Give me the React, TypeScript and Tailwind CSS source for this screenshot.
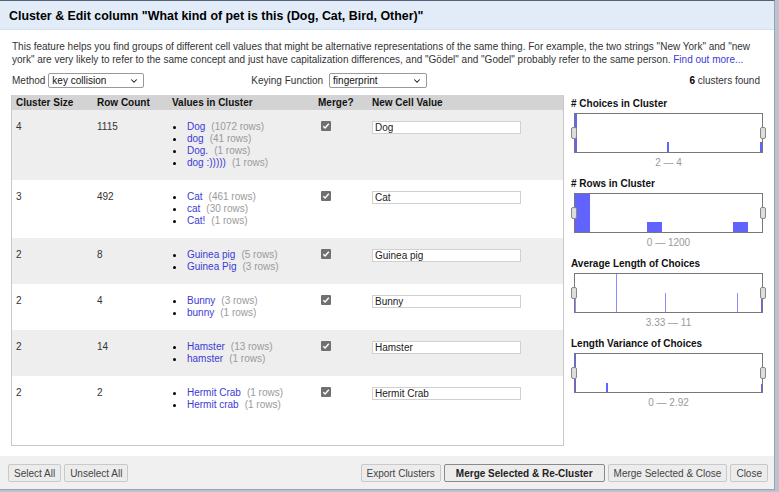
import { ChevronDown } from "lucide-react"

type Choice = { v: string; n: number }
type Cluster = { size: number; rows: number; choices: Choice[]; value: string }

const clusters: Cluster[] = [
  {
    size: 4,
    rows: 1115,
    value: "Dog",
    choices: [
      { v: "Dog", n: 1072 },
      { v: "dog", n: 41 },
      { v: "Dog.", n: 1 },
      { v: "dog :)))))", n: 1 },
    ],
  },
  {
    size: 3,
    rows: 492,
    value: "Cat",
    choices: [
      { v: "Cat", n: 461 },
      { v: "cat", n: 30 },
      { v: "Cat!", n: 1 },
    ],
  },
  {
    size: 2,
    rows: 8,
    value: "Guinea pig",
    choices: [
      { v: "Guinea pig", n: 5 },
      { v: "Guinea Pig", n: 3 },
    ],
  },
  {
    size: 2,
    rows: 4,
    value: "Bunny",
    choices: [
      { v: "Bunny", n: 3 },
      { v: "bunny", n: 1 },
    ],
  },
  {
    size: 2,
    rows: 14,
    value: "Hamster",
    choices: [
      { v: "Hamster", n: 13 },
      { v: "hamster", n: 1 },
    ],
  },
  {
    size: 2,
    rows: 2,
    value: "Hermit Crab",
    choices: [
      { v: "Hermit Crab", n: 1 },
      { v: "Hermit crab", n: 1 },
    ],
  },
]

// bars: [left px, width px, height px, light?]
type Bar = [number, number, number, boolean?]

const facets: { title: string; range: string; bars: Bar[] }[] = [
  {
    title: "# Choices in Cluster",
    range: "2 \u2014 4",
    bars: [
      [0, 2, 38],
      [92, 2, 10],
      [185, 2, 10],
    ],
  },
  {
    title: "# Rows in Cluster",
    range: "0 \u2014 1200",
    bars: [
      [0, 15, 38],
      [72, 15, 10],
      [158, 15, 10],
    ],
  },
  {
    title: "Average Length of Choices",
    range: "3.33 \u2014 11",
    bars: [
      [0, 1, 14, true],
      [41, 1, 38, true],
      [90, 1, 19, true],
      [162, 1, 19, true],
      [186, 1, 19],
    ],
  },
  {
    title: "Length Variance of Choices",
    range: "0 \u2014 2.92",
    bars: [
      [0, 1, 38],
      [31, 2, 9],
      [186, 1, 8],
    ],
  },
]

function Check() {
  return (
    <span className="flex h-[10px] w-[10px] items-center justify-center rounded-[1px] bg-[#707070]">
      <svg width="8" height="8" viewBox="0 0 8 8">
        <path d="M1.3 4.2 L3.1 6 L6.8 1.8" fill="none" stroke="#fff" strokeWidth="1.4" />
      </svg>
    </span>
  )
}

function Facet({ title, range, bars }: { title: string; range: string; bars: Bar[] }) {
  return (
    <div className="mb-[9px]">
      <div className="text-[10px] font-bold leading-[12px] text-[#111]">{title}</div>
      <div className="relative ml-[3px] mt-[3px] h-[40px] w-[189px] border border-[#777] bg-white">
        {bars.map(([l, w, h, light], i) => (
          <div
            key={i}
            className={light ? "absolute bottom-0 bg-[#8c8cff]" : "absolute bottom-0 bg-[#6262ff]"}
            style={{ left: l, width: w, height: h }}
          />
        ))}
        <span className="absolute left-[-4px] top-[13px] h-[12px] w-[6px] rounded-[2px] border border-[#888] bg-[#ddd]" />
        <span className="absolute right-[-4px] top-[13px] h-[12px] w-[6px] rounded-[2px] border border-[#888] bg-[#ddd]" />
      </div>
      <div className="ml-[3px] mt-[4px] w-[189px] text-center text-[10px] leading-[12px] text-[#999]">{range}</div>
    </div>
  )
}

function Btn({ children, bold }: { children: string; bold?: boolean }) {
  return (
    <button
      className={
        bold
          ? "h-[18px] rounded-[2px] border border-[#8a8a8a] bg-[#ececec] px-[11px] text-[10px] font-bold text-[#222]"
          : "h-[18px] rounded-[2px] border border-[#c9c9c9] bg-[#ececec] px-[5px] text-[10px] text-[#444]"
      }
    >
      {children}
    </button>
  )
}

export default function App() {
  return (
    <div className="h-[492px] w-[779px] bg-[#bcc3ce] font-['Liberation_Sans',Arial,sans-serif]">
      <div className="flex h-[490px] w-[775px] flex-col border-r border-b border-t border-[#9aa3b2] border-t-[#56627a] bg-white">
        <div className="flex h-[29px] shrink-0 items-center border-b border-[#d5dfec] bg-[#e2ecf9] pl-[9px] pt-[3px] text-[12.4px] font-bold text-black">
          Cluster &amp; Edit column "What kind of pet is this (Dog, Cat, Bird, Other)"
        </div>

        <div className="flex-1 px-[11px] pt-[10px]">
          <p className="pl-[1px] text-[10px] leading-[13px] text-[#333]">
            This feature helps you find groups of different cell values that might be alternative representations of
            the same thing. For example, the two strings "New York" and "new york" are very likely to refer to the same
            concept and just have capitalization differences, and "Gödel" and "Godel" probably refer to the same person.{" "}
            <a className="text-[#3b3bd6]">Find out more...</a>
          </p>

          <div className="mt-[7px] flex h-[15px] items-center text-[10px] text-[#333]">
            <span className="pl-[1px]">Method</span>
            <span className="ml-[3px] flex h-[15px] w-[96px] items-center justify-between rounded-[2px] border border-[#999] bg-white pl-[3px] pr-[4px] text-[#111]">
              key collision
              <ChevronDown size={10} strokeWidth={2.5} />
            </span>
            <span className="ml-[107px]">Keying Function</span>
            <span className="ml-[6px] flex h-[15px] w-[98px] items-center justify-between rounded-[2px] border border-[#999] bg-white pl-[3px] pr-[4px] text-[#111]">
              fingerprint
              <ChevronDown size={10} strokeWidth={2.5} />
            </span>
            <span className="ml-auto pr-[3px]">
              <b className="text-black">6</b> clusters found
            </span>
          </div>

          <div className="mt-[7px] flex">
            <div className="h-[351px] w-[553px] border-b border-l border-r border-[#c8c8c8] text-[10px] leading-[12px] text-[#333]">
              <div className="grid h-[15px] grid-cols-[81px_75px_146px_54px_1fr] items-center bg-[#d3d3d3] font-bold text-[#111]">
                <span className="pl-[4px]">Cluster Size</span>
                <span className="pl-[4px]">Row Count</span>
                <span className="pl-[4px]">Values in Cluster</span>
                <span className="pl-[4px]">Merge?</span>
                <span className="pl-[4px]">New Cell Value</span>
              </div>
              {clusters.map((c, i) => (
                <div
                  key={i}
                  className={
                    i % 2 === 0
                      ? "grid grid-cols-[81px_75px_146px_54px_1fr] bg-[#eeeeee] pb-[11px] pt-[11px]"
                      : "grid grid-cols-[81px_75px_146px_54px_1fr] bg-white pb-[11px] pt-[11px]"
                  }
                >
                  <span className="pl-[4px]">{c.size}</span>
                  <span className="pl-[4px]">{c.rows}</span>
                  <ul className="pl-[5px]">
                    {c.choices.map((ch) => (
                      <li key={ch.v} className="flex items-center whitespace-nowrap">
                        <span className="mr-[11px] h-[3px] w-[3px] rounded-full bg-black" />
                        <a className="text-[#3b3bd6]">{ch.v}</a>
                        <span className="ml-[6px] text-[#9a9a9a]">({ch.n} rows)</span>
                      </li>
                    ))}
                  </ul>
                  <span className="pl-[7px]">
                    <Check />
                  </span>
                  <span className="pl-[4px]">
                    <span className="flex h-[13px] w-[149px] items-center border border-[#d0d0d0] bg-white pl-[2px] text-[#222]">
                      {c.value}
                    </span>
                  </span>
                </div>
              ))}
            </div>

            <div className="ml-[7px] pt-[3px]">
              {facets.map((f) => (
                <Facet key={f.title} {...f} />
              ))}
            </div>
          </div>
        </div>

        <div className="flex h-[33px] shrink-0 items-center gap-[3px] bg-[#f0f0f0] pl-[8px] pr-[6px] pt-[1px]">
          <Btn>Select All</Btn>
          <Btn>Unselect All</Btn>
          <span className="flex-1" />
          <Btn>Export Clusters</Btn>
          <Btn bold>Merge Selected &amp; Re-Cluster</Btn>
          <Btn>Merge Selected &amp; Close</Btn>
          <Btn>Close</Btn>
        </div>
      </div>
    </div>
  )
}
